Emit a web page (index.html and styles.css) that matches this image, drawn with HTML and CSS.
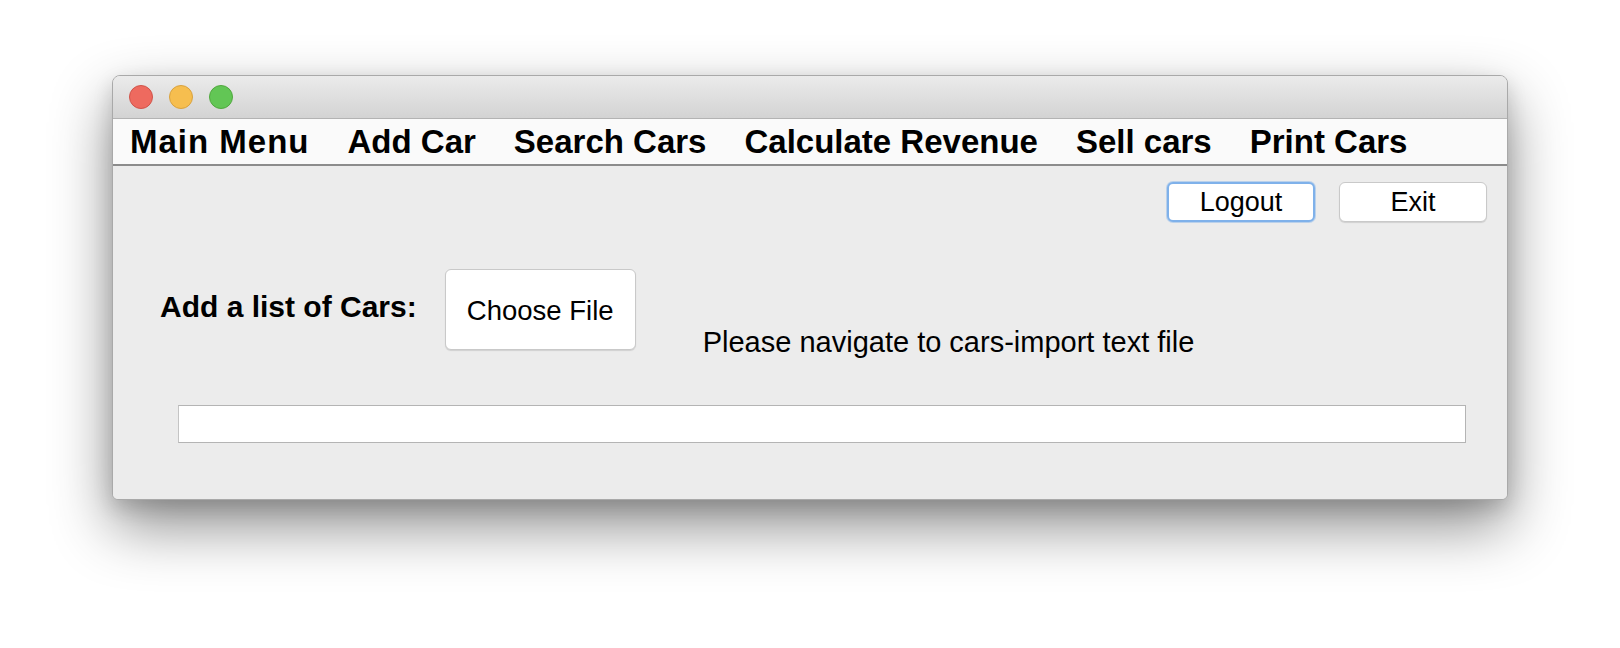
FILE: index.html
```html
<!DOCTYPE html>
<html lang="en">
<head>
<meta charset="utf-8">
<title>Car Dealer</title>
<link rel="stylesheet" href="styles.css">
</head>
<body>
<div class="window">
  <div class="titlebar">
    <span class="light red"></span>
    <span class="light yellow"></span>
    <span class="light green"></span>
  </div>
  <div class="menubar">
    <span class="menu-item">Main Menu</span>
    <span class="menu-item">Add Car</span>
    <span class="menu-item">Search Cars</span>
    <span class="menu-item">Calculate Revenue</span>
    <span class="menu-item">Sell cars</span>
    <span class="menu-item">Print Cars</span>
  </div>
  <div class="content">
    <div class="toolbar">
      <button class="btn btn-focus">Logout</button>
      <button class="btn">Exit</button>
    </div>
    <div class="import-row">
      <span class="import-label">Add a list of Cars:</span>
      <button class="btn btn-choose">Choose File</button>
      <span class="status">Please navigate to cars-import text file</span>
    </div>
    <div class="path-field"></div>
  </div>
</div>
</body>
</html>
```
FILE: styles.css
```css
html, body {
  margin: 0;
  padding: 0;
  background: #ffffff;
}
body {
  width: 1620px;
  height: 648px;
  overflow: hidden;
  font-family: "Liberation Sans", Arial, sans-serif;
  color: #000;
}
.window {
  margin-left: 112px;
  margin-top: 75px;
  width: 1396px;
  height: 425px;
  box-sizing: border-box;
  border: 1px solid #a9a9a9;
  border-radius: 8px 8px 6px 6px;
  overflow: hidden;
  display: flex;
  flex-direction: column;
  background: #ececec;
  box-shadow: 0 26px 60px rgba(0, 0, 0, 0.45), 0 8px 20px rgba(0, 0, 0, 0.14);
}
.titlebar {
  height: 43px;
  flex: none;
  box-sizing: border-box;
  background: linear-gradient(#ebebeb, #d3d3d3);
  border-bottom: 1px solid #b3b3b3;
  display: flex;
  align-items: center;
  gap: 16px;
  padding-left: 16px;
  padding-bottom: 1px;
}
.light {
  width: 24px;
  height: 24px;
  box-sizing: border-box;
  border-radius: 50%;
  display: block;
}
.red { background: #ee6a5f; border: 1px solid #d0544a; }
.yellow { background: #f6be4f; border: 1px solid #d9a23f; }
.green { background: #62c655; border: 1px solid #51a83f; }
.menubar {
  flex: none;
  height: 45px;
  background: #fafafa;
  border-bottom: 2px solid #8c8c8c;
  display: flex;
  gap: 38px;
  padding-left: 17px;
}
.menu-item {
  font-weight: bold;
  font-size: 33px;
  line-height: 45px;
  white-space: nowrap;
}
.menu-item:first-child {
  letter-spacing: 1px;
}
.content {
  flex: 1;
  display: flex;
  flex-direction: column;
  background: #ececec;
}
.toolbar {
  display: flex;
  justify-content: flex-end;
  gap: 24px;
  padding: 16px 20px 0 0;
}
.btn {
  font-family: "Liberation Sans", Arial, sans-serif;
  font-size: 27px;
  color: #000;
  background: #ffffff;
  border: 1px solid #c9c9c9;
  border-radius: 6px;
  box-shadow: 0 1px 1px rgba(0, 0, 0, 0.12);
  width: 148px;
  height: 40px;
  padding: 0;
  margin: 0;
  display: flex;
  align-items: center;
  justify-content: center;
}
.btn-focus {
  border: 2px solid #7fb1ea;
  box-shadow: 0 0 0 1px rgba(127, 177, 234, 0.45);
}
.import-row {
  display: flex;
  align-items: flex-start;
  height: 81px;
  margin-top: 47px;
  padding-left: 47px;
}
.import-label {
  font-weight: bold;
  font-size: 30px;
  line-height: 34px;
  margin-top: 21px;
  white-space: nowrap;
}
.btn-choose {
  width: 191px;
  height: 81px;
  margin-left: 28px;
  font-size: 27.5px;
  padding-top: 2px;
}
.status {
  font-size: 29px;
  line-height: 32px;
  margin-top: 57px;
  margin-left: 67px;
  white-space: nowrap;
}
.path-field {
  margin: 55px 41px 0 65px;
  height: 38px;
  box-sizing: border-box;
  background: #ffffff;
  border: 1px solid #b4b4b4;
  border-left-color: #c4c4c4;
}
```
